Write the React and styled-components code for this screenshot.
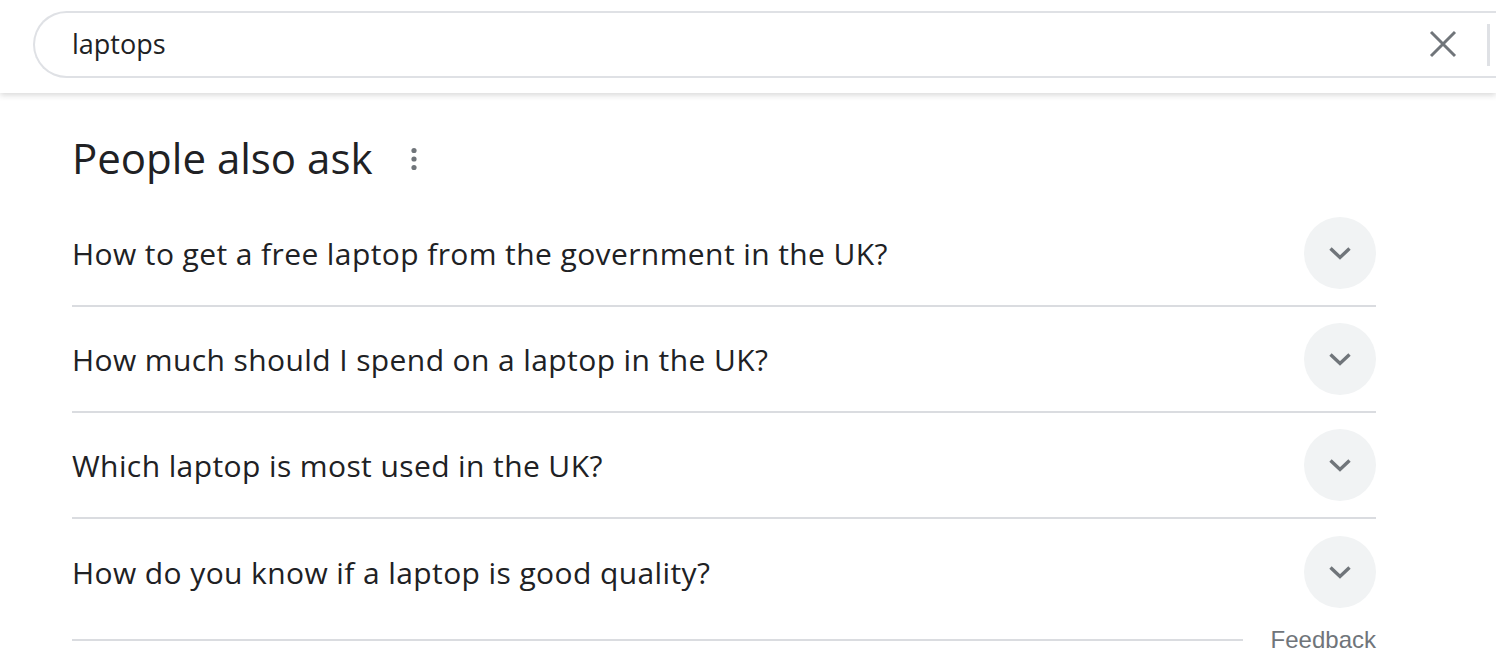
import React from 'react';
import styled, { createGlobalStyle } from 'styled-components';

const QUESTIONS = [
    'How to get a free laptop from the government in the UK?',
    'How much should I spend on a laptop in the UK?',
    'Which laptop is most used in the UK?',
    'How do you know if a laptop is good quality?'
];

const GlobalStyle = createGlobalStyle`
    html, body {
        margin: 0;
        padding: 0;
        background: #fff;
        overflow: hidden;
    }
    body {
        font-family: 'Open Sans', Roboto, Arial, sans-serif;
        color: #202124;
    }
`;

const ChevronIcon = () => (
    <svg width="24" height="24" viewBox="0 0 24 24">
        <path d="M2.5 7.5 12 16.5l9.5-9" fill="none" stroke="#70757a" strokeWidth="3.4" />
    </svg>
);

const ClearIcon = () => (
    <svg width="32" height="32" viewBox="0 0 24 24">
        <path d="M3 3l18 18M21 3L3 21" fill="none" stroke="#70757a" strokeWidth="2.2" />
    </svg>
);

const MoreIcon = () => (
    <svg width="8" height="24" viewBox="0 0 8 24">
        <circle cx="4" cy="3.5" r="2.6" fill="#70757a" />
        <circle cx="4" cy="12" r="2.6" fill="#70757a" />
        <circle cx="4" cy="20.5" r="2.6" fill="#70757a" />
    </svg>
);

export default () => (
    <Page>
        <GlobalStyle />
        <Header>
            <SearchBox>
                <SearchText>laptops</SearchText>
                <ClearButton>
                    <ClearIcon />
                </ClearButton>
                <Divider />
            </SearchBox>
        </Header>
        <Section>
            <TitleRow>
                <Title>People also ask</Title>
                <MoreButton>
                    <MoreIcon />
                </MoreButton>
            </TitleRow>
            <List>
                {QUESTIONS.map(question => (
                    <Question key={question}>
                        <QuestionText>{question}</QuestionText>
                        <ExpandButton>
                            <ChevronIcon />
                        </ExpandButton>
                    </Question>
                ))}
            </List>
            <Footer>
                <FooterLine />
                <Feedback>Feedback</Feedback>
            </Footer>
        </Section>
    </Page>
);

const Page = styled.div`
    width: 1496px;
    height: 672px;
    overflow: hidden;
`;

const Header = styled.header`
    height: 93px;
    padding: 11px 0 0 33px;
    box-sizing: border-box;
    box-shadow: 0 2px 6px rgba(32, 33, 36, 0.18);
    position: relative;
    z-index: 1;
`;

const SearchBox = styled.div`
    height: 67px;
    box-sizing: border-box;
    border: 2px solid #dfe1e5;
    border-right: none;
    border-radius: 34px 0 0 34px;
    display: flex;
    align-items: center;
    padding-left: 37px;
`;

const SearchText = styled.div`
    flex: 1;
    font-size: 27px;
    color: #202124;
    padding-bottom: 3px;
`;

const ClearButton = styled.div`
    display: flex;
    align-items: center;
    justify-content: center;
    width: 40px;
    margin-right: 24px;
    padding-bottom: 2px;
`;

const Divider = styled.div`
    width: 3px;
    height: 42px;
    background: #dfe1e5;
    margin-right: 6px;
`;

const Section = styled.section`
    width: 1304px;
    margin-left: 72px;
`;

const TitleRow = styled.div`
    display: flex;
    align-items: center;
    height: 108px;
    padding-top: 20px;
    box-sizing: border-box;
`;

const Title = styled.h2`
    margin: 0;
    font-size: 42px;
    font-weight: 400;
`;

const MoreButton = styled.div`
    margin-left: 38px;
    display: flex;
    align-items: center;
    padding-top: 4px;
`;

const List = styled.div`
    display: flex;
    flex-direction: column;
`;

const Question = styled.div`
    height: 106px;
    display: flex;
    align-items: center;
    justify-content: space-between;
    border-bottom: 2px solid #dadce0;
    box-sizing: border-box;

    &:last-child {
        border-bottom: none;
    }
`;

const QuestionText = styled.div`
    font-size: 30px;
    letter-spacing: 0.4px;
    color: #202124;
`;

const ExpandButton = styled.div`
    width: 72px;
    height: 72px;
    border-radius: 50%;
    background: #f1f3f4;
    display: flex;
    align-items: center;
    justify-content: center;
`;

const Footer = styled.div`
    display: flex;
    align-items: center;
    gap: 28px;
    margin-top: 1px;
`;

const FooterLine = styled.div`
    flex: 1;
    height: 2px;
    background: #dadce0;
`;

const Feedback = styled.div`
    font-family: Arial, 'Liberation Sans', sans-serif;
    font-size: 24px;
    color: #70757a;
`;
